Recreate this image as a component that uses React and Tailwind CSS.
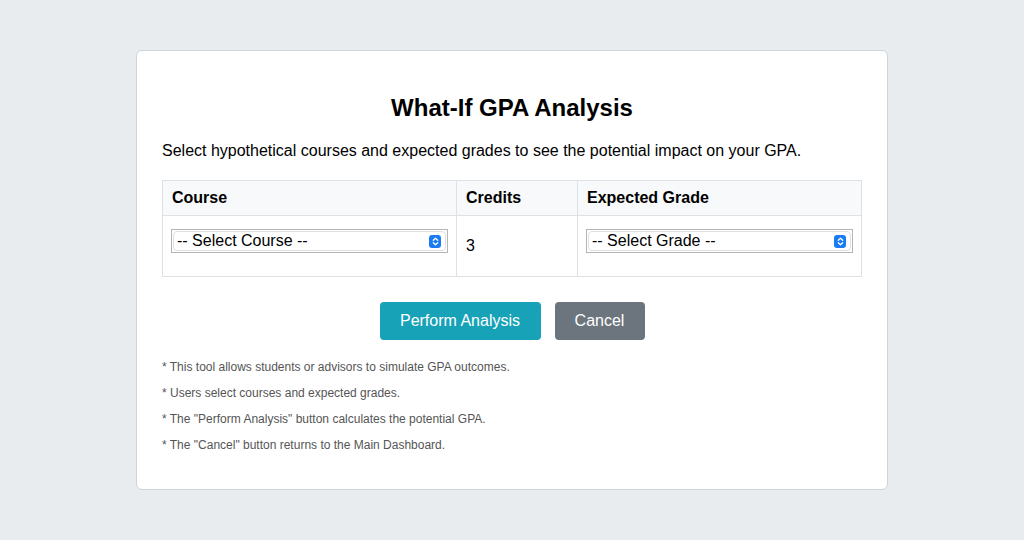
import React from "react";

function FakeSelect({ label }) {
  return (
    <div className="-mx-[1px] h-[24px] border border-[#b5b5b5] p-[1px] bg-white">
      <div className="flex h-full items-center justify-between rounded-[4px] border border-[#e0e0e0] pl-[3px] pr-[4px]">
        <span className="text-[16px] leading-none text-black">{label}</span>
        <span className="flex items-center justify-center w-[12px] h-[13px] rounded-[3px] bg-[#1a7cf5]">
          <svg width="7" height="9" viewBox="0 0 7 9" fill="none">
            <path d="M1.3 3.3 L3.5 1.3 L5.7 3.3" stroke="white" strokeWidth="1.3" strokeLinecap="round" strokeLinejoin="round" />
            <path d="M1.3 5.7 L3.5 7.7 L5.7 5.7" stroke="white" strokeWidth="1.3" strokeLinecap="round" strokeLinejoin="round" />
          </svg>
        </span>
      </div>
    </div>
  );
}

export default function App() {
  const notes = [
    '* This tool allows students or advisors to simulate GPA outcomes.',
    "* Users select courses and expected grades.",
    '* The "Perform Analysis" button calculates the potential GPA.',
    '* The "Cancel" button returns to the Main Dashboard.',
  ];

  return (
    <div className="min-h-[540px] bg-[#e9ecef] pt-[50px] font-['Liberation_Sans',Arial,sans-serif]">
      <div className="mx-auto w-[752px] h-[440px] bg-white border border-[#ced4da] rounded-[6px] px-[25px] pt-[43px]">
        <h2 className="text-center text-[24px] font-bold text-black leading-[28px]">What-If GPA Analysis</h2>

        <p className="mt-[20px] text-[16px] leading-[18px] text-black">
          Select hypothetical courses and expected grades to see the potential impact on your GPA.
        </p>

        {/* Table */}
        <table className="mt-[20px] w-[700px] border-collapse text-[16px]">
          <thead>
            <tr className="bg-[#f8f9fa] h-[35px]">
              <th className="w-[294px] border border-[#dee2e6] px-[9px] text-left font-bold">Course</th>
              <th className="w-[121px] border border-[#dee2e6] px-[9px] text-left font-bold">Credits</th>
              <th className="border border-[#dee2e6] px-[9px] text-left font-bold">Expected Grade</th>
            </tr>
          </thead>
          <tbody>
            <tr className="h-[61px]">
              <td className="border border-[#dee2e6] px-[9px] pt-[13px] pb-[23px] align-top">
                <FakeSelect label="-- Select Course --" />
              </td>
              <td className="border border-[#dee2e6] px-[9px] align-middle">3</td>
              <td className="border border-[#dee2e6] px-[9px] pt-[13px] pb-[23px] align-top">
                <FakeSelect label="-- Select Grade --" />
              </td>
            </tr>
          </tbody>
        </table>

        <div className="mt-[25px] flex justify-center gap-[14px]">
          <button className="h-[38px] w-[161px] rounded-[4px] bg-[#17a2b8] text-white text-[16px]">
            Perform Analysis
          </button>
          <button className="h-[38px] w-[90px] rounded-[4px] bg-[#6c757d] text-white text-[16px]">
            Cancel
          </button>
        </div>

        <div className="mt-[20px] flex flex-col gap-[12px] text-[12px] leading-[14px] text-[#555]">
          {notes.map((n) => (
            <p key={n}>{n}</p>
          ))}
        </div>
      </div>
    </div>
  );
}
